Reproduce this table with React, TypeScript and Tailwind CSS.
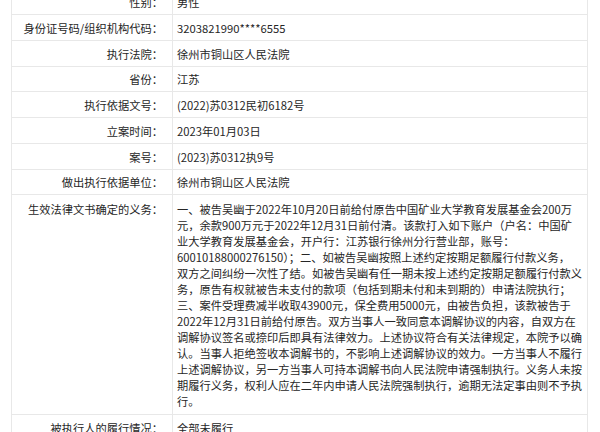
const font = {
  fontFamily: '"Noto Sans CJK SC", "Noto Sans", sans-serif',
};

type Row = { label: string; value: string; h: string };

const rows: Row[] = [
  { label: "性别", value: "男性", h: "h-[26px]" },
  { label: "身份证号码/组织机构代码", value: "3203821990****6555", h: "h-[26px]" },
  { label: "执行法院", value: "徐州市铜山区人民法院", h: "h-[26px]" },
  { label: "省份", value: "江苏", h: "h-[25px]" },
  { label: "执行依据文号", value: "(2022)苏0312民初6182号", h: "h-[26px]" },
  { label: "立案时间", value: "2023年01月03日", h: "h-[26px]" },
  { label: "案号", value: "(2023)苏0312执9号", h: "h-[26px]" },
  { label: "做出执行依据单位", value: "徐州市铜山区人民法院", h: "h-[25px]" },
];

const duty = [
  "一、被告吴幽于2022年10月20日前给付原告中国矿业大学教育发展基金会200万",
  "元，余款900万元于2022年12月31日前付清。该款打入如下账户（户名：中国矿",
  "业大学教育发展基金会，开户行：江苏银行徐州分行营业部，账号：",
  "60010188000276150）；二、如被告吴幽按照上述约定按期足额履行付款义务，",
  "双方之间纠纷一次性了结。如被告吴幽有任一期未按上述约定按期足额履行付款义",
  "务，原告有权就被告未支付的款项（包括到期未付和未到期的）申请法院执行；",
  "三、案件受理费减半收取43900元，保全费用5000元，由被告负担，该款被告于",
  "2022年12月31日前给付原告。双方当事人一致同意本调解协议的内容，自双方在",
  "调解协议签名或捺印后即具有法律效力。上述协议符合有关法律规定，本院予以确",
  "认。当事人拒绝签收本调解书的，不影响上述调解协议的效力。一方当事人不履行",
  "上述调解协议，另一方当事人可持本调解书向人民法院申请强制执行。义务人未按",
  "期履行义务，权利人应在二年内申请人民法院强制执行，逾期无法定事由则不予执",
  "行。",
];

function Label({ text, className = "" }: { text: string; className?: string }) {
  return (
    <div
      className={`flex w-[161px] shrink-0 justify-end border-r border-[#e8e8e8] pr-[9px] ${className}`}
    >
      {text}：
    </div>
  );
}

export default function App() {
  return (
    <div
      className="h-[432px] w-[600px] overflow-hidden bg-white text-[11.25px] leading-[16px] text-[#262626]"
      style={font}
    >
      {/* top row is scrolled partly out of view, as in the screenshot */}
      <div className="-mt-[11px] ml-[11px] w-[577px] border-x border-[#e8e8e8]">
        {rows.map((r) => (
          <div className={`flex border-b border-[#e8e8e8] ${r.h}`} key={r.label}>
            <Label className="items-center" text={r.label} />
            <div className="flex flex-1 items-center pl-[4px]">{r.value}</div>
          </div>
        ))}

        {/* 生效法律文书 */}
        <div className="flex h-[220px] border-b border-[#e8e8e8]">
          <Label className="pt-[6px]" text="生效法律文书确定的义务" />
          <div className="flex-1 pt-[6px] pl-[4px]">
            {duty.map((line) => (
              <div className="whitespace-nowrap" key={line}>
                {line}
              </div>
            ))}
          </div>
        </div>

        <div className="flex h-[26px] border-b border-[#e8e8e8]">
          <Label className="items-center" text="被执行人的履行情况" />
          <div className="flex flex-1 items-center pl-[4px]">全部未履行</div>
        </div>
      </div>
    </div>
  );
}
